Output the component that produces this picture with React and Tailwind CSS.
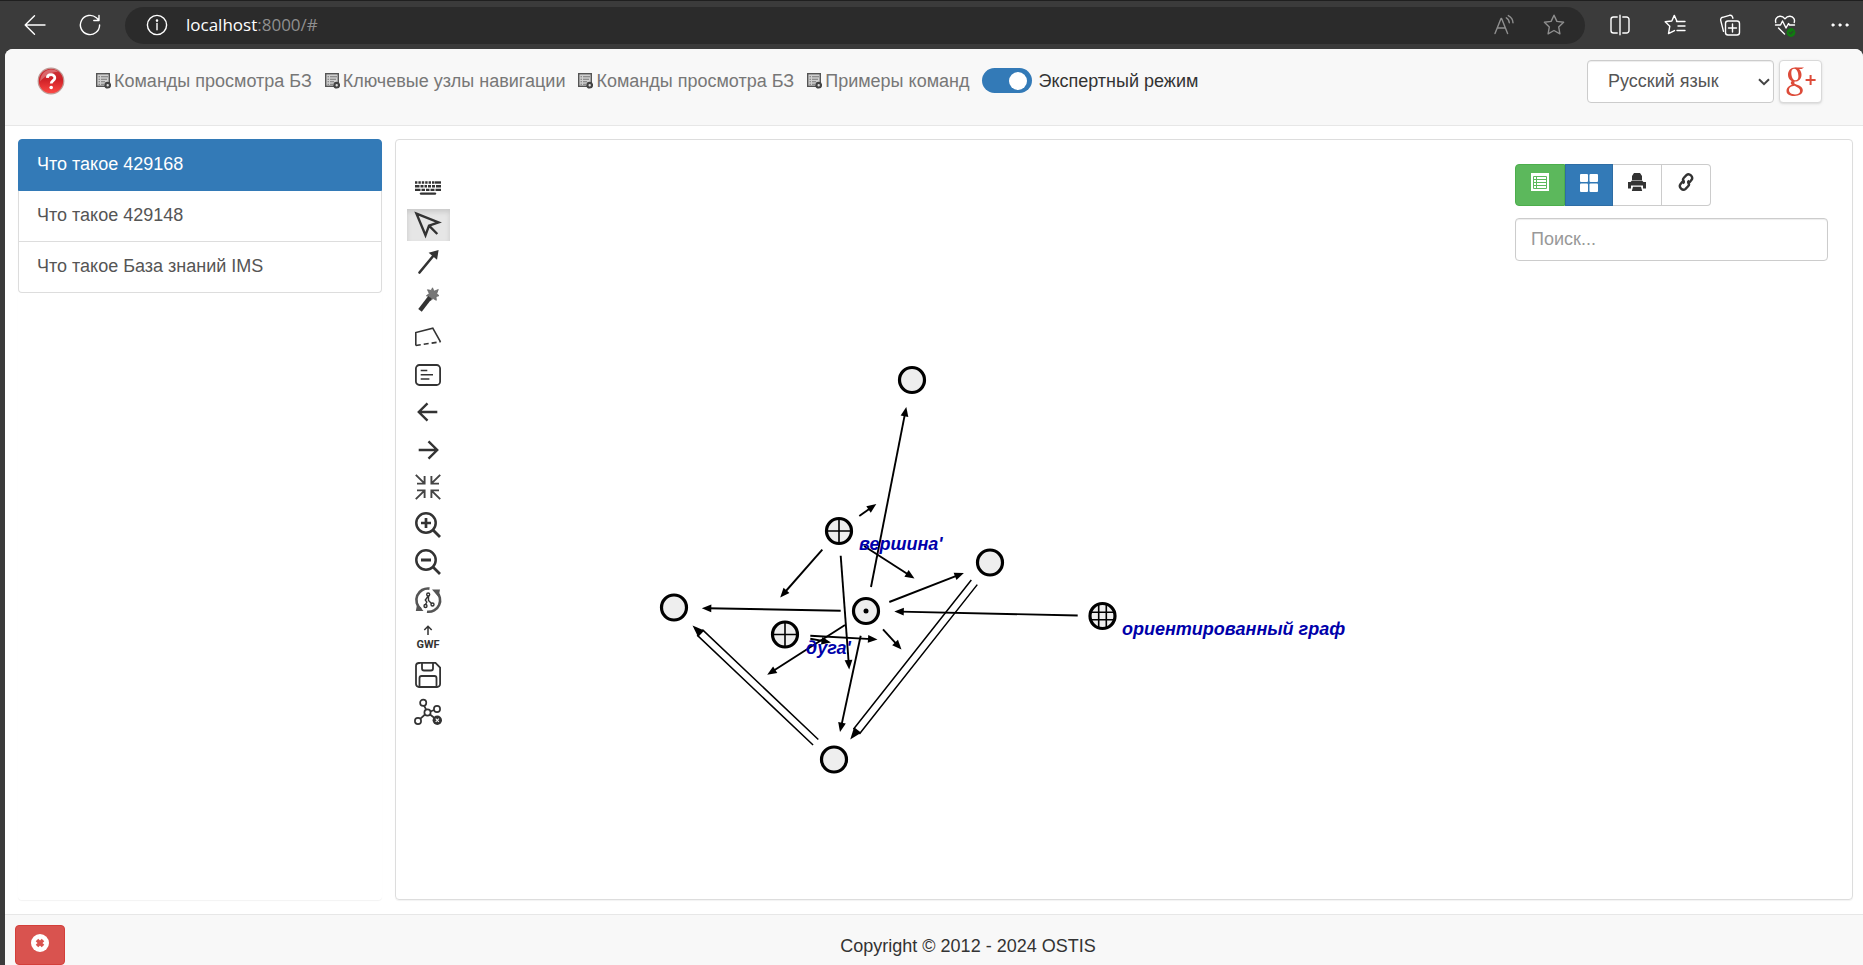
import React from 'react';

const ink = '#333333';

/* ---------- Browser toolbar ---------- */

function ChromeIcon({ children, color = '#ffffff' }) {
  return (
    <svg width="24" height="24" viewBox="0 0 24 24" fill="none" stroke={color} strokeWidth="1.4" strokeLinecap="round" strokeLinejoin="round" aria-hidden="true">
      {children}
    </svg>
  );
}

function ChromeButton({ label, children, color }) {
  return (
    <button type="button" aria-label={label} className="flex h-8 w-8 items-center justify-center rounded">
      <ChromeIcon color={color}>{children}</ChromeIcon>
    </button>
  );
}

const starPath = 'M12 2.2l2.9 6.2 6.7.9-4.9 4.7 1.2 6.8L12 17.5l-5.9 3.3 1.2-6.8L2.4 9.3l6.7-.9z';

function BrowserBar() {
  return (
    <div className="flex h-[49px] shrink-0 items-center border-t border-[#1f1f1f] bg-[#3b3b3b] pl-[19px] pr-[7px]">
      <div className="flex items-center gap-[23px]">
        <ChromeButton label="Назад">
          <path d="M22 12H2.5M11.5 2.8L2.2 12l9.3 9.2" />
        </ChromeButton>
        <ChromeButton label="Обновить">
          <path d="M21.6 12a9.6 9.6 0 1 1-3.2-7.2l2.6 2.4M21 2.5v5h-5.200" />
        </ChromeButton>
      </div>
      <div className="ml-[19px] flex h-[37px] flex-1 items-center rounded-full bg-[#2b2b2b] pl-[20px] pr-[15px]">
        <ChromeIcon>
          <circle cx="12" cy="12" r="9.6" />
          <path d="M12 10.5v6.3" />
          <circle cx="12" cy="7.6" r="0.6" fill="#fff" />
        </ChromeIcon>
        <div className="ml-[17px] flex-1 font-['Open_Sans',sans-serif] text-[17px] leading-6 text-white">
          localhost<span className="text-[#8f8f8f]">:8000/#</span>
        </div>
        <div className="flex gap-[18px]">
          <ChromeButton label="Прочесть вслух" color="#8f8f8f">
            <path d="M3 20.500L9 5.500h.6l6 15M5.300 15h8M14.300 4.800c1.800 1 2.800 2.600 3 5M16.300 2.600c2.900 1.500 4.600 4 4.700 7.200" />
          </ChromeButton>
          <ChromeButton label="Добавить в избранное" color="#8f8f8f">
            <path d={starPath} />
          </ChromeButton>
        </div>
      </div>
      <div className="ml-[19px] flex gap-[23px]">
        <ChromeButton label="Разделить экран">
          <path d="M9.200 4H5.500a2.500 2.500 0 0 0-2.500 2.500v11a2.500 2.500 0 0 0 2.500 2.500h3.700M14.800 4h3.700a2.500 2.500 0 0 1 2.500 2.500v11a2.500 2.500 0 0 1-2.500 2.500h-3.700M12 2.200v19.600" />
        </ChromeButton>
        <ChromeButton label="Избранное">
          <path d="M14.500 8.300L13.800 8 11.300 2.400 8.800 8l-6.600.8 4.600 4.400-1.300 7.400 6-3M13.500 8.500H22M15 13h7M14 17.500h8" />
        </ChromeButton>
        <ChromeButton label="Коллекции">
          <path d="M5.500 18.300L2.700 7.300a2.500 2.500 0 0 1 1.900-3L11.500 2.300a2.500 2.500 0 0 1 3 1.800l.4 1.100" />
          <rect x="7.500" y="8" width="14" height="14" rx="2.500" />
          <path d="M14.500 11v8M10.500 15h8" />
        </ChromeButton>
        <ChromeButton label="Производительность">
          <path d="M2.800 9.500C1.800 6.500 3.500 3.500 7 3.200c2.300-.1 3.800 1 5 2.600 1.200-1.600 2.700-2.700 5-2.600 3.500.3 5.200 3.300 4.200 6.300M2.500 12h5l2-4 3.500 7 2.500-4.500 1 1.500h5M5.500 15l6 6" />
          <circle cx="18" cy="19.500" r="4.400" fill="#107c10" stroke="none" />
          <path d="M16.200 19.600l1.300 1.200 2.300-2.300" stroke="#2b4b2b" />
        </ChromeButton>
        <ChromeButton label="Параметры">
          <circle cx="5" cy="12" r="1.200" fill="#fff" stroke="#fff" strokeWidth="0.8" />
          <circle cx="12" cy="12" r="1.200" fill="#fff" stroke="#fff" strokeWidth="0.8" />
          <circle cx="19" cy="12" r="1.200" fill="#fff" stroke="#fff" strokeWidth="0.8" />
        </ChromeButton>
      </div>
    </div>
  );
}

/* ---------- Page header ---------- */

function HelpIcon() {
  return (
    <svg width="28" height="28" viewBox="0 0 28 28" aria-hidden="true">
      <defs>
        <linearGradient id="help-red" x1="0" y1="0" x2="0" y2="1">
          <stop offset="0" stopColor="#c9353a" />
          <stop offset="0.45" stopColor="#cf2127" />
          <stop offset="1" stopColor="#ff4a45" />
        </linearGradient>
      </defs>
      <circle cx="14" cy="14" r="12.800" fill="url(#help-red)" stroke="#bf9a96" strokeWidth="1.200" />
      <path d="M3 14.500C3.500 6.500 9 2.500 14 2.500c3 0 5 .8 7 2.300C14 5 8 9 3 14.500z" fill="#fff" opacity="0.28" />
      <path d="M10.300 10.900c.2-4.300 7.600-4.200 7.500.1 0 2.600-3.600 2.800-3.600 5.600" fill="none" stroke="#fff" strokeWidth="2.800" />
      <circle cx="14.200" cy="20.500" r="1.800" fill="#fff" />
    </svg>
  );
}

function CommandIcon() {
  return (
    <svg width="15" height="16" viewBox="0 0 15 16" aria-hidden="true">
      <rect x="0.700" y="0.700" width="12.600" height="12.600" fill="#d0d0d0" stroke="#555" strokeWidth="1.400" />
      <path d="M2.500 3.800h1.500M5 3.800h7M2.500 6.300h1.500M5 6.300h6M2.500 8.800h1.500M5 8.800h4M2.500 11.200h1.500M5 11.200h3" stroke="#777" strokeWidth="1.100" />
      <circle cx="11.700" cy="12.200" r="2.300" fill="#ddd" stroke="#444" strokeWidth="2.200" />
    </svg>
  );
}

const menus = ['Команды просмотра БЗ', 'Ключевые узлы навигации', 'Команды просмотра БЗ', 'Примеры команд'];

function GooglePlus() {
  return (
    <svg width="32" height="32" viewBox="0 0 32 32" fill="#dd4b39" stroke="none" aria-hidden="true">
      {/* upper bowl */}
      <path
        fillRule="evenodd"
        d="M9.800 1.500c4 0 6.700 3.200 6.700 7.200s-2.700 6.900-6.700 6.900S3 12.700 3 8.700s2.800-7.200 6.800-7.200zM9.300 2.700c-2 0-3 1.600-3 4 0 3.700 1.500 7.600 4.200 7.600 1.900 0 2.900-1.500 2.900-4 0-3.800-1.500-7.600-4.100-7.600z"
      />
      {/* ear */}
      <path d="M9.500 1.500h9.500l-2.300 1.600h-3.700z" />
      {/* neck */}
      <path d="M7 14.800l3 .7c-1.500 1.400-.6 2.200 1 3.300l-2.500.8c-3.300-1.500-3.300-3-1.500-4.800z" />
      {/* lower bowl */}
      <path
        fillRule="evenodd"
        d="M9.800 18.100c4.200 1 8 2.700 8 6.200 0 3.600-3.600 5.700-8.300 5.700-4.800 0-8-1.800-8-5 0-3.700 3.800-6.200 8.300-6.900zM9.600 19.800c-3.200.2-5.600 1.700-5.600 4.300 0 2.800 2.600 4.400 6 4.400 3.200 0 5.100-1.300 5.100-3.500 0-2.500-2.400-3.600-5.500-5.200z"
      />
      <path d="M24.600 9h2v4h4v2h-4v4h-2v-4h-4v-2h4z" />
    </svg>
  );
}

function PageHeader() {
  return (
    <header className="flex h-[77px] shrink-0 items-start justify-between rounded-t-lg border-b border-[#e7e7e7] bg-[#f8f8f8] pl-8 pr-[41px] pt-[11px]">
      <nav className="flex h-[41px] items-center">
        <a href="#help" aria-label="Помощь" className="mr-[31px]">
          <HelpIcon />
        </a>
        <div className="flex items-center gap-[13px]">
          {menus.map((name, i) => (
            <a key={i} href="#menu" className="flex items-center gap-[3px] whitespace-nowrap text-[#777777]">
              <CommandIcon />
              {name}
            </a>
          ))}
          <label className="flex items-center gap-[6px] whitespace-nowrap text-[#333333]">
            <input type="checkbox" role="switch" defaultChecked className="peer sr-only" />
            <span className="flex h-[25px] w-[50px] items-center justify-start rounded-full bg-[#cccccc] px-[5px] peer-checked:justify-end peer-checked:bg-[#337ab7]">
              <span className="h-[18px] w-[18px] rounded-full bg-white" />
            </span>
            Экспертный режим
          </label>
        </div>
      </nav>
      <div className="flex gap-[5px]">
        <div className="grid">
          <select
            aria-label="Язык"
            className="col-start-1 row-start-1 h-[43px] w-[187px] appearance-none rounded border border-[#cccccc] bg-white pb-[2px] pl-[20px] text-[#555555] shadow-[inset_0_1px_1px_rgba(0,0,0,0.075)]"
          >
            <option>Русский язык</option>
            <option>English</option>
          </select>
          <svg className="pointer-events-none col-start-1 row-start-1 mr-[4px] self-center justify-self-end" width="12" height="8" viewBox="0 0 12 8" fill="none" stroke="#444" strokeWidth="2" aria-hidden="true">
            <path d="M1 1.200l5 5 5-5" />
          </svg>
        </div>
        <button type="button" aria-label="Google+" className="flex h-[43px] w-[43px] items-center justify-center rounded border border-[#d9d9d9] bg-white shadow-sm">
          <GooglePlus />
        </button>
      </div>
    </header>
  );
}

/* ---------- Editor toolbar ---------- */

const tools = [
  {
    name: 'Клавиатура',
    icon: (
      <g strokeWidth="2.400">
        <path d="M0 8.500h19" strokeDasharray="2.400 1" />
        <path d="M19.500 8.500H26" />
        <path d="M0 12.200h4.500M5.500 12.200h3M9.500 12.200h2.500M13 12.200h3M17 12.200h3M21 12.200h5M0 15.900h5.500M6.500 15.900h3.500M11 15.900h3.500M15.500 15.900h4M20.500 15.900H26" />
        <path d="M6 19.600h14" strokeLinecap="round" />
      </g>
    ),
  },
  {
    name: 'Выбор',
    active: true,
    icon: <path d="M1.500 1.700l22 8.700-9.500 3.300-3.500 9.600zM14 13.700l8.300 8.300" strokeWidth="2.400" />,
  },
  {
    name: 'Дуга',
    icon: (
      <>
        <path d="M4.500 23.500L19 6" strokeWidth="2.600" strokeLinecap="round" />
        <path d="M22.700 2l-1.200 7.300-6.300-5.200z" fill={ink} strokeWidth="1.500" />
      </>
    ),
  },
  {
    name: 'Шина',
    icon: (
      <>
        <path d="M17.500.8l1.500 3.500 4.300-1.800-1.600 4 2.300 2.200-3 .9.300 3.700-3.200-1.800-2.900 2.300-.3-4-3.600-1 3-2.200-1.800-3.900 3.700.8z" fill="#777" stroke="#666" strokeWidth="0.800" />
        <path d="M5 23.300l10-13" strokeWidth="4.400" />
      </>
    ),
  },
  {
    name: 'Контур',
    icon: (
      <g strokeWidth="1.600">
        <path d="M.8 21.500V8.500l17-4.300 7.700 13.600" />
        <path d="M.8 21.500l24.700-3.700" strokeDasharray="5 3" />
      </g>
    ),
  },
  {
    name: 'Содержимое',
    icon: (
      <>
        <rect x="0.900" y="3" width="24.200" height="20" rx="3.500" strokeWidth="1.800" />
        <path d="M5.700 8.500h6.600M5.700 12.800H18M5.700 17h8.700" strokeWidth="1.600" />
      </>
    ),
  },
  { name: 'Отменить', icon: <path d="M22.300 13H4M12.500 4.300L3.800 13l8.700 8.700" strokeWidth="2.400" /> },
  { name: 'Повторить', icon: <path d="M3.700 13H22M13.500 4.300l8.700 8.700-8.700 8.700" strokeWidth="2.400" /> },
  {
    name: 'Центрировать',
    icon: <path d="M.8.8l8.400 8.400M9.600 2v7.600H2M25.200.8l-8.400 8.400M16.400 2v7.600H24M.8 25.200l8.400-8.400M9.600 24v-7.600H2M25.200 25.200l-8.400-8.400M16.400 24v-7.600H24" stroke="#444" strokeWidth="1.900" />,
  },
  {
    name: 'Увеличить',
    icon: (
      <>
        <circle cx="11" cy="11" r="9.700" strokeWidth="2.500" />
        <path d="M18 18l7 7" strokeWidth="2.800" />
        <path d="M11 6v10M6 11h10" strokeWidth="2.700" />
      </>
    ),
  },
  {
    name: 'Уменьшить',
    icon: (
      <>
        <circle cx="11" cy="11" r="9.700" strokeWidth="2.500" />
        <path d="M18 18l7 7M6 11h10" strokeWidth="2.800" />
      </>
    ),
  },
  {
    name: 'Обновить сцену',
    icon: (
      <>
        <g stroke="#555" strokeWidth="2.600">
          <path d="M6 22.200A11.500 11.500 0 0 1 14.500 1.600" />
          <path d="M21 4.500A11.500 11.500 0 0 1 12 24.700" />
        </g>
        <path d="M17 2.500h8l-1.500 7.500zM8.500 24H.8l1.500-7.500z" fill="#555" stroke="none" />
        <g strokeWidth="1.400">
          <circle cx="13.200" cy="7.500" r="1.500" />
          <circle cx="10.500" cy="19" r="1.500" />
          <circle cx="17.500" cy="17.500" r="1.500" />
          <path d="M13.300 9l-3 4 1.500 2-1.300 2.500M13.500 9v4.500l3 3" />
        </g>
      </>
    ),
  },
  {
    name: 'Экспорт GWF',
    icon: (
      <>
        <path d="M13 11V2.500M9.300 6L13 2.300 16.700 6" strokeWidth="1.500" />
        <text x="13" y="24" textAnchor="middle" fill={ink} stroke="none" className="font-['Roboto',sans-serif] text-[11px] font-bold">GWF</text>
      </>
    ),
  },
  {
    name: 'Сохранить',
    icon: (
      <g strokeWidth="1.800">
        <path d="M4 .9h16.500l4.600 4.600V22a3 3 0 0 1-3 3H4a3 3 0 0 1-3-3V4a3 3 0 0 1 3-3z" />
        <path d="M7 1v5.500a2 2 0 0 0 2 2h7a2 2 0 0 0 2-2V1M4.500 25V16a2 2 0 0 1 2-2h13a2 2 0 0 1 2 2v9" />
      </g>
    ),
  },
  {
    name: 'Удалить из базы',
    icon: (
      <>
        <g strokeWidth="1.700">
          <path d="M9 6.500l2.300 4.300M15.500 12.500l3.500-1.500M10 15.500l-4.800 4.300M15 15.500l4.500 3.500" />
          <circle cx="8.200" cy="3.700" r="3.100" />
          <circle cx="22" cy="10" r="3.100" />
          <circle cx="12.500" cy="13.500" r="3.100" />
          <circle cx="3" cy="22" r="3.100" />
        </g>
        <circle cx="22.300" cy="21.300" r="4.700" fill={ink} stroke="none" />
        <path d="M20.700 19.700l3.200 3.200M23.900 19.700l-3.200 3.200" stroke="#fff" strokeWidth="1.100" />
      </>
    ),
  },
];

function EditorToolbar() {
  return (
    <div role="toolbar" aria-label="Инструменты" className="mt-[31px] flex h-[557px] w-[43px] shrink-0 flex-col justify-between">
      {tools.map((tool) => (
        <button
          key={tool.name}
          type="button"
          aria-label={tool.name}
          aria-pressed={Boolean(tool.active)}
          className={
            tool.active
              ? 'flex h-8 items-center bg-[#e6e6e6] pl-2 shadow-[inset_0_3px_5px_rgba(0,0,0,0.125)]'
              : 'flex h-8 items-center pl-2'
          }
        >
          <svg width="26" height="26" viewBox="0 0 26 26" fill="none" stroke={ink} className="overflow-visible" aria-hidden="true">
            {tool.icon}
          </svg>
        </button>
      ))}
    </div>
  );
}

/* ---------- Graph ---------- */

const nodes = [
  { x: 912, y: 380 },
  { x: 839, y: 531, kind: 'cross' },
  { x: 990, y: 562.5 },
  { x: 674, y: 607.5 },
  { x: 785, y: 634.5, kind: 'cross' },
  { x: 866, y: 611, kind: 'dot' },
  { x: 834, y: 759.5 },
  { x: 1102.5, y: 616, kind: 'grid' },
];

const edges = [
  [871, 587, 906.3, 407],
  [859.3, 516, 876.3, 504],
  [864, 546, 914.5, 578.5],
  [822.3, 549.7, 780.2, 597.5],
  [840.7, 555.7, 849.2, 669.5],
  [840.7, 610.7, 701.8, 608.2],
  [889.3, 602, 963.9, 573],
  [1077.7, 615.5, 894.3, 611.5],
  [883, 629.3, 901.5, 649.5],
  [810.3, 635.7, 877.5, 639.5],
  [810.3, 638.7, 831, 642.5],
  [845, 625, 767.2, 674.8],
  [860.7, 635.7, 840, 732],
];

const pairs = [
  [815.7, 742.3, 692.5, 625.5],
  [974.3, 582.3, 850.2, 739.5],
];

const labels = [
  { x: 859, y: 550, text: "вершина'" },
  { x: 806, y: 654, text: "дуга'" },
  { x: 1122, y: 635, text: 'ориентированный граф' },
];

function placement([x1, y1, x2, y2]) {
  return {
    length: Math.hypot(x2 - x1, y2 - y1),
    transform: `translate(${x1} ${y1}) rotate(${(Math.atan2(y2 - y1, x2 - x1) * 180) / Math.PI})`,
  };
}

function Edge({ points }) {
  const { length, transform } = placement(points);
  return (
    <g transform={transform}>
      <path d={`M0 0H${length - 6}`} stroke="#000" strokeWidth="1.900" />
      <path d={`M${length} 0l-9.500 -3.900v7.800z`} fill="#000" />
    </g>
  );
}

function PairEdge({ points }) {
  const { length, transform } = placement(points);
  return (
    <g transform={transform} stroke="#000" strokeWidth="1.500">
      <path d={`M0 -3.800H${length - 10}M0 3.800H${length - 10}`} />
      <path d={`M${length} 0l-12 -4.500v9z`} fill="#000" stroke="none" />
    </g>
  );
}

function Node({ x, y, kind }) {
  return (
    <g transform={`translate(${x} ${y})`} stroke="#000">
      <circle r="12.500" fill="#eeeeee" strokeWidth="3.200" />
      {kind === 'cross' && <path d="M-12 0h24M0 -12v24" strokeWidth="1.600" />}
      {kind === 'dot' && <circle r="2.500" fill="#000" stroke="none" />}
      {kind === 'grid' && <path d="M-11.500 -3.800h23M-11.500 3.800h23M-3.800 -11.500v23M3.800 -11.500v23" strokeWidth="1.600" />}
    </g>
  );
}

function Graph() {
  return (
    <svg className="min-w-0 flex-1" aria-label="Ориентированный граф">
      <g transform="translate(-450 -140)">
        {pairs.map((p, i) => (
          <PairEdge key={i} points={p} />
        ))}
        {edges.map((p, i) => (
          <Edge key={i} points={p} />
        ))}
        {nodes.map((n, i) => (
          <Node key={i} {...n} />
        ))}
        {labels.map((l) => (
          <text key={l.text} x={l.x} y={l.y} fill="#0000aa" className="text-[18px] font-bold italic">
            {l.text}
          </text>
        ))}
      </g>
    </svg>
  );
}

/* ---------- View controls ---------- */

function ViewControls() {
  return (
    <div className="mr-6 mt-6 flex w-[313px] shrink-0 flex-col gap-3">
      <div className="flex h-[42px]">
        <button type="button" aria-label="Список" className="flex w-[50px] justify-center rounded-l border border-[#4cae4c] bg-[#5cb85c] pt-2">
          <svg width="18" height="18" viewBox="0 0 18 18" aria-hidden="true">
            <rect width="18" height="18" fill="#fff" />
            <path d="M2.500 3.500h13v12h-13zM2.500 6.500h13M2.500 9.500h13M2.500 12.500h13M5.500 3.500v12" fill="none" stroke="#5cb85c" />
          </svg>
        </button>
        <button type="button" aria-label="Плитка" className="flex w-12 justify-center border border-[#2e6da4] bg-[#337ab7] pt-[9px]">
          <svg width="18" height="18" viewBox="0 0 18 18" fill="#fff" aria-hidden="true">
            <rect width="8" height="8" rx="1" />
            <rect x="9.500" width="8.500" height="8" rx="1" />
            <rect y="9.500" width="8" height="8.500" rx="1" />
            <rect x="9.500" y="9.500" width="8.500" height="8.500" rx="1" />
          </svg>
        </button>
        <button type="button" aria-label="Печать" className="flex w-[49px] justify-center border-y border-r border-[#cccccc] bg-white pt-2">
          <svg width="18" height="18" viewBox="0 0 18 18" fill={ink} aria-hidden="true">
            <path d="M6 0h6l2 3v4H4V3zM0 9h2.500l1.500-1.500h10L15.500 9H18v6.500h-3V12.500H3v3H0zM5 13.800h8l1.200 4.200H3.800z" />
          </svg>
        </button>
        <button type="button" aria-label="Ссылка" className="flex w-[49px] justify-center rounded-r border-y border-r border-[#cccccc] bg-white pt-2">
          <svg width="18" height="18" viewBox="0 0 18 18" fill="none" stroke={ink} strokeWidth="2.400" aria-hidden="true">
            <path d="M11 10.800c.9-1.200.8-2.200-.3-3.300M7.300 9.200c-1.700-1.600-1.600-3.100-.4-4.400l2.500-2.600c2.900-2.600 7.500 1.500 5 4.900l-2 2.400" />
            <path d="M7 7.200c-.9 1.200-.8 2.200.3 3.300M10.700 8.800c1.700 1.600 1.600 3.100.4 4.400l-2.500 2.600c-2.900 2.600-7.500-1.500-5-4.900l2-2.400" />
          </svg>
        </button>
      </div>
      <input
        type="search"
        aria-label="Поиск"
        placeholder="Поиск..."
        className="h-[43px] w-full rounded border border-[#cccccc] bg-white px-[15px] text-[#555555] shadow-[inset_0_1px_1px_rgba(0,0,0,0.075)] placeholder:text-[#999999]"
      />
    </div>
  );
}

/* ---------- History ---------- */

function History() {
  return (
    <aside className="flex w-[364px] shrink-0 flex-col rounded shadow-[0_1px_1px_rgba(0,0,0,0.05)]">
      <a href="#429168" aria-current="true" className="rounded-t border border-[#337ab7] bg-[#337ab7] px-[18px] pb-[13px] pt-[11px] leading-[26px] text-white">
        Что такое 429168
      </a>
      <a href="#429148" className="border-x border-b border-[#dddddd] px-[18px] pb-[13px] pt-[11px] leading-[26px] text-[#555555]">
        Что такое 429148
      </a>
      <a href="#ims" className="rounded-b border-x border-b border-[#dddddd] px-[18px] pb-[13px] pt-[11px] leading-[26px] text-[#555555]">
        Что такое База знаний IMS
      </a>
    </aside>
  );
}

export default function App() {
  return (
    <div className="flex min-h-screen flex-col bg-[#3b3b3b] font-['Liberation_Sans',Arial,sans-serif] text-[18px] leading-6">
      <BrowserBar />
      <div className="ml-[5px] flex flex-1 flex-col rounded-t-lg bg-white">
        <PageHeader />
        <main className="flex flex-1 gap-[13px] pb-[14px] pl-[13px] pr-[10px] pt-[13px]">
          <History />
          <section className="flex min-w-0 flex-1 rounded border border-[#dddddd] pl-[11px] shadow-[0_1px_1px_rgba(0,0,0,0.05)]">
            <EditorToolbar />
            <Graph />
            <ViewControls />
          </section>
        </main>
        <footer className="flex h-[51px] shrink-0 items-start border-t border-[#e7e7e7] bg-[#f8f8f8] pl-[10px] pt-[10px] text-[#333333]">
          <button type="button" aria-label="Закрыть" className="flex h-10 w-[50px] shrink-0 justify-center rounded border border-[#d43f3a] bg-[#d9534f] pt-2">
            <svg width="18" height="18" viewBox="0 0 18 18" aria-hidden="true">
              <circle cx="9" cy="9" r="9" fill="#fff" />
              <path d="M6 6l6 6M12 6l-6 6" stroke="#d9534f" strokeWidth="3.600" />
            </svg>
          </button>
          <p className="flex-1 pl-2 pt-[9px] text-center">Copyright © 2012 - 2024 OSTIS</p>
        </footer>
      </div>
    </div>
  );
}
